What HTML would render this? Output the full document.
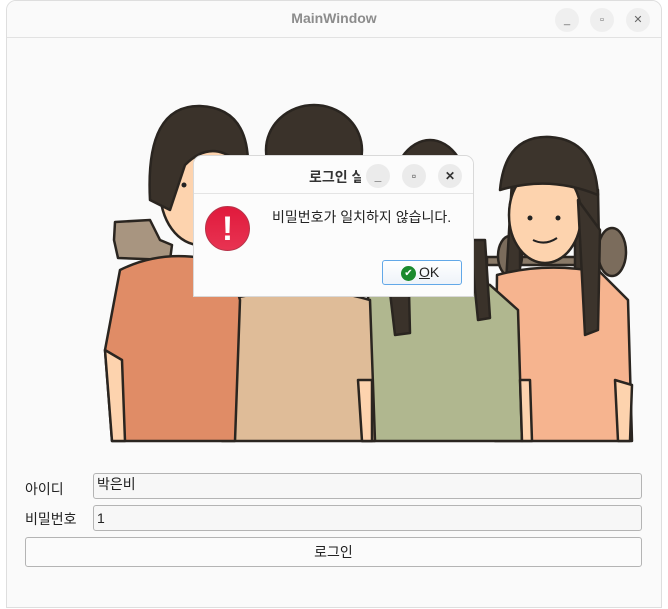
<!DOCTYPE html>
<html><head><meta charset="utf-8"><style>
*{margin:0;padding:0;box-sizing:border-box}
body{width:668px;height:609px;background:#fff;position:relative;overflow:hidden;font-family:"Liberation Sans","Noto Sans CJK KR",sans-serif;}
.win{position:absolute;left:6px;top:0;width:656px;height:608px;background:#fafafa;border:1px solid #dedede;border-radius:10px 10px 0 0;overflow:hidden}
.tb{position:absolute;left:0;top:0;width:100%;height:37px;border-bottom:1px solid #e2e2e2;background:#fafafa}
.tt{position:absolute;left:0;width:100%;top:9px;text-align:center;font-weight:bold;font-size:14px;color:#8c8c8c}
.cb{position:absolute;width:24px;height:24px;border-radius:50%;background:#efefef;font-size:11px;color:#666;text-align:center;line-height:24px}
.lbl{position:absolute;font-size:14px;color:#222}
.inp{position:absolute;left:87px;width:549px;height:26px;border:1px solid #b4b4b4;border-radius:3px;background:#f7f7f7;font-size:14px;color:#222;padding-left:3px}
.btn{position:absolute;left:19px;top:537px;width:617px;height:30px;border:1px solid #b4b4b4;border-radius:3px;background:#fbfbfb;text-align:center;font-size:14px;line-height:28px;color:#222}
.dlg{position:absolute;left:193px;top:155px;width:281px;height:142px;background:#fcfcfc;border:1px solid #d9d9d9;border-radius:9px 9px 0 0;overflow:hidden}
.dcb{position:absolute;top:8px;width:24px;height:24px;border-radius:50%;background:#ebebeb;color:#333;text-align:center;line-height:24px;font-size:12px;font-weight:bold}
</style></head><body>
<div class="win">
<div class="tb"><div class="tt">MainWindow</div>
<div class="cb" style="left:548px;top:7px">_</div>
<div class="cb" style="left:583px;top:7px">▫</div>
<div class="cb" style="left:619px;top:7px">✕</div></div>
</div>
<svg style="position:absolute;left:0;top:0" width="668" height="609" viewBox="0 0 668 609">
<g stroke="#2a2520" stroke-width="2.5" stroke-linejoin="round">
<path d="M115 222 L150 220 L160 240 L172 245 L170 260 L118 258 L114 240 Z" fill="#a89580"/>
<rect x="487" y="257" width="130" height="8" fill="#8a7a68"/>
<ellipse cx="510" cy="256" rx="12" ry="20" fill="#7b6c5c"/>
<ellipse cx="612" cy="252" rx="14" ry="24" fill="#7b6c5c"/>
<path d="M512 180 L505 300 L520 300 L520 200 Z" fill="#3c342c"/>
<path d="M575 170 L575 330 L590 335 L600 300 L598 190 Z" fill="#3c342c"/>
<ellipse cx="545" cy="215" rx="36" ry="48" fill="#fdd3ae"/>
<path d="M500 190 Q505 135 550 137 Q595 140 598 195 Q550 175 500 190 Z" fill="#3c342c"/>
<path d="M497 275 Q545 262 600 272 L628 300 L632 441 L495 441 Z" fill="#f6b48f"/>
<path d="M578 200 L600 230 L598 330 L585 335 Z" fill="#3c342c"/>
<ellipse cx="430" cy="200" rx="40" ry="60" fill="#3a322a"/>
<path d="M370 290 Q430 270 490 285 L518 310 L522 441 L362 441 L365 310 Z" fill="#b0b78f"/>
<path d="M385 250 L395 335 L410 333 L408 250 Z" fill="#3a322a"/>
<path d="M470 240 L478 320 L490 318 L485 240 Z" fill="#3a322a"/>
<ellipse cx="314" cy="150" rx="48" ry="45" fill="#3a322a"/>
<path d="M228 300 Q300 280 370 300 L375 441 L222 441 Z" fill="#dfbc98"/>
<ellipse cx="200" cy="190" rx="40" ry="55" fill="#fdd3ae"/>
<path d="M150 200 Q145 105 200 106 Q250 108 248 170 L235 160 Q210 140 185 165 L170 210 Z" fill="#3a322a"/>
<path d="M120 270 Q170 245 230 265 L240 300 L235 441 L112 441 L105 350 Z" fill="#e08c66"/>
<path d="M105 350 L112 441 L125 441 L122 360 Z" fill="#fdd3ae"/>
<path d="M358 380 L362 441 L372 441 L372 380 Z" fill="#fdd3ae"/>
<path d="M520 380 L522 441 L532 441 L530 380 Z" fill="#fdd3ae"/>
<path d="M615 380 L618 441 L630 441 L632 385 Z" fill="#fdd3ae"/>
</g>
<circle cx="530" cy="218" r="2.5" fill="#222"/><circle cx="558" cy="218" r="2.5" fill="#222"/>
<path d="M533 240 Q545 246 557 238" stroke="#222" stroke-width="2" fill="none"/>
<circle cx="184" cy="185" r="2.5" fill="#222"/>
</svg>
<div class="win" style="background:transparent;border:none">
<div class="lbl" style="left:19px;top:479px">아이디</div>
<div class="inp" style="top:473px">박은비</div>
<div class="lbl" style="left:19px;top:509px">비밀번호</div>
<div class="inp" style="top:505px;line-height:24px">1</div>
<div class="btn">로그인</div>
</div>
<div class="dlg">
<div style="position:absolute;left:0;top:0;width:100%;height:38px;border-bottom:1px solid #e4e4e4;background:#fcfcfc"></div>
<div style="position:absolute;left:115px;top:11px;font-size:14px;font-weight:bold;color:#333;width:52px;overflow:hidden;white-space:nowrap">로그인 실패</div>
<div class="dcb" style="left:172px">_</div>
<div class="dcb" style="left:208px">▫</div>
<div class="dcb" style="left:244px">✕</div>
<div style="position:absolute;left:11px;top:50px;width:45px;height:45px;border-radius:50%;background:linear-gradient(#e01a3c,#e83352);border:1px solid #b8344a;color:#fff;text-align:center;font-size:34px;font-weight:bold;line-height:44px">!</div>
<div style="position:absolute;left:78px;top:51px;font-size:14px;color:#222">비밀번호가 일치하지 않습니다.</div>
<div style="position:absolute;left:188px;top:104px;width:80px;height:25px;border:1px solid #62a8e8;border-radius:3px;background:linear-gradient(#fff,#eef3f9);font-size:14px;line-height:23px;color:#222;padding-left:18px"><span style="position:absolute;left:18px;top:5px;width:15px;height:15px;border-radius:50%;background:#1b8a2e;color:#fff;font-size:10px;line-height:15px;text-align:center">✔</span><span style="margin-left:18px;text-decoration:underline">O</span>K</div>
</div>
</body></html>
